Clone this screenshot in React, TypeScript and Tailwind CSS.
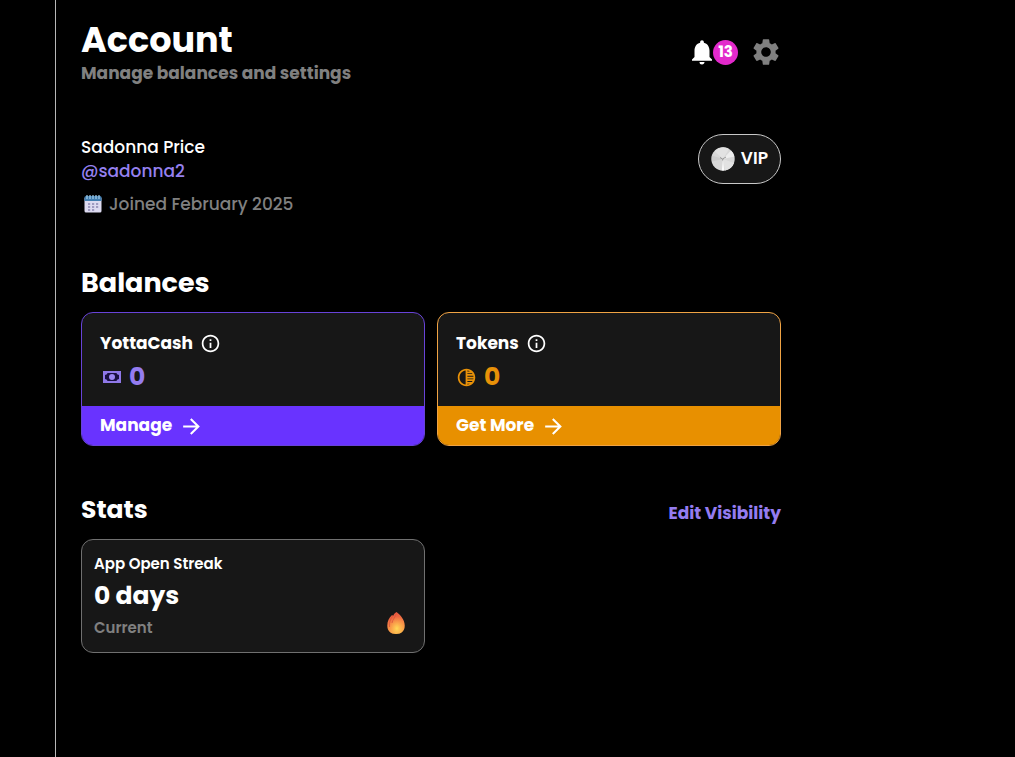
import type { ReactNode } from "react";
import { MdArrowForward, MdInfoOutline, MdNotifications, MdSettings, MdTonality } from "react-icons/md";

function CalendarIcon() {
  return (
    <svg viewBox="0 0 20 20" className="size-5" aria-hidden="true">
      <rect x="1.500" y="3" width="17" height="15.500" rx="1.500" fill="#dcdaf0" />
      <path d="M1.500 7V3.500q0-1.500 1.500-1.500h14q1.500 0 1.500 1.500V7z" fill="#427eb0" />
      <path d="M4 1v4M7 1v4M10 1v4M13 1v4M16 1v4" stroke="#a6d0ec" strokeWidth="1.200" />
      <path d="M5 10h2.200M9 10h2.200M13 10h2.200M5 13h2.200M9 13h2.200M13 13h2.200M5 16h2.200M9 16h2.200" stroke="#8a86b0" strokeWidth="1.500" />
    </svg>
  );
}

function CashIcon() {
  return (
    <svg viewBox="0 0 20 20" className="size-5" aria-hidden="true">
      <path d="M1 4h18v12H1z" fill="#8f78e8" />
      <path d="M5.500 6h9q0 1.500 2.500 2v4q-2.500.5-2.500 2h-9q0-1.500-2.500-2V8q2.500-.5 2.500-2z" fill="#1a1042" />
      <circle cx="10" cy="10" r="3" fill="#9b85f2" />
    </svg>
  );
}

function DiscIcon() {
  return (
    <svg viewBox="0 0 24 24" className="size-6" aria-hidden="true">
      <circle cx="12" cy="12" r="11.700" fill="#d8d8d8" />
      <path d="M12 12 3.500 4A11.700 11.700 0 0 1 18 2zM12 12l11 4a11.700 11.700 0 0 1-9 7.500z" fill="#e2e2e2" />
      <path d="m12 12 8-8.500a11.700 11.700 0 0 1 3.400 6z" fill="#ededed" />
      <path d="m12 12-1.200 11.500h2.400z" fill="#fafafa" />
      <path d="M12 12 1 8.500v6z" fill="#cdcdcd" />
      <path d="m9 10.500 2.500 1.500L15 10M12 12l-.4 1.500" stroke="#858585" strokeWidth=".8" fill="none" />
    </svg>
  );
}

function FlameIcon() {
  return (
    <svg viewBox="0 0 24 26" className="h-[26px] w-6" aria-hidden="true">
      <defs>
        <linearGradient id="flame" x1=".4" y1="0" x2=".6" y2="1">
          <stop offset="0" stopColor="#e6523e" />
          <stop offset=".5" stopColor="#f47c45" />
          <stop offset="1" stopColor="#f9a143" />
        </linearGradient>
        <radialGradient id="glow" cx=".55" cy=".75" r=".55">
          <stop offset="0" stopColor="#ffda58" />
          <stop offset="1" stopColor="#ffb44b" stopOpacity="0" />
        </radialGradient>
      </defs>
      <path d="M12.500 2c4 3 8.200 7.500 8.200 13.500 0 5.500-3.200 8.500-8.700 8.500s-8.700-3-8.700-8.500c0-4.500 1.700-7.500 4.700-10.500l1.200.7C10 4 11 3 12.500 2z" fill="url(#flame)" />
      <path d="M12.500 2c4 3 8.200 7.500 8.200 13.500 0 5.500-3.200 8.500-8.700 8.500s-8.700-3-8.700-8.500z" fill="url(#glow)" />
      <path d="M8.500 6c-2.200 3.500-3.500 6.500-3 11M12 4c-1 4-3.500 5.500-4 9" stroke="#d9573e" strokeWidth=".8" fill="none" />
    </svg>
  );
}

type BalanceProps = {
  title: string;
  icon: ReactNode;
  action: string;
  border: string;
  fill: string;
  text: string;
};

function BalanceCard({ title, icon, action, border, fill, text }: BalanceProps) {
  return (
    <article className={`overflow-hidden rounded-xl border bg-[#171717] ${border}`}>
      <div className="flex h-[93px] flex-col gap-1 px-[18px] pt-4">
        <div className="flex items-center gap-[7px]">
          <h3 className="text-[17px] leading-7 font-bold">{title}</h3>
          <button type="button" aria-label={`About ${title}`}>
            <MdInfoOutline className="size-[21px]" />
          </button>
        </div>
        <div className={`flex items-center gap-[7px] ${text}`}>
          {icon}
          <span className="text-[25px] leading-8 font-bold">0</span>
        </div>
      </div>
      <button type="button" className={`flex h-[39px] w-full items-center gap-[7px] px-[18px] pt-px text-[17px] font-bold ${fill}`}>
        {action}
        <MdArrowForward className="size-[25px]" />
      </button>
    </article>
  );
}

export default function App() {
  return (
    <div className="flex min-h-screen bg-black font-['Poppins','Inter',sans-serif] text-white">
      <aside className="w-14 shrink-0 border-r border-[#b8b8b8]" />
      <main className="min-w-0 max-w-[750px] flex-1 px-[25px] pt-5">
        <header className="flex items-start justify-between">
          <div>
            <h1 className="text-[35px] leading-10 font-bold">Account</h1>
            <p className="pt-px text-[17px] leading-6 font-bold text-[#808080]">Manage balances and settings</p>
          </div>
          <div className="-mr-px flex items-center gap-3 pt-4">
            <button type="button" className="flex items-center" aria-label="Notifications, 13 unread">
              <MdNotifications className="-mr-1 size-[30px]" />
              <span className="flex size-[25px] items-center justify-center rounded-full bg-[#e229cb] text-[15px] font-bold">13</span>
            </button>
            <button type="button" aria-label="Settings">
              <MdSettings className="size-8 text-[#808080]" />
            </button>
          </div>
        </header>

        <section className="flex items-start justify-between pt-[49px]">
          <div>
            <p className="pt-px text-[17px] leading-6 font-medium">Sadonna Price</p>
            <a href="#profile" className="block text-[17px] leading-6 font-medium text-[#9580f0]">@sadonna2</a>
            <p className="flex items-center gap-1.5 pt-[9px] text-[17px] leading-6 font-medium text-[#808080]">
              <span className="pl-0.5"><CalendarIcon /></span>
              Joined February 2025
            </p>
          </div>
          <button type="button" className="flex h-[50px] items-center gap-1.5 rounded-full border border-[#c8c8c8] bg-[#171717] px-3 text-[17px] font-semibold">
            <DiscIcon />
            VIP
          </button>
        </section>

        <section className="pt-[49px]">
          <h2 className="text-[27px] leading-9 font-bold">Balances</h2>
          <div className="grid grid-cols-2 gap-3 pt-[11px]">
            <BalanceCard title="YottaCash" icon={<span className="pl-0.5"><CashIcon /></span>} action="Manage" border="border-[#6843d8]" fill="bg-[#6933ff]" text="text-[#947cf0]" />
            <BalanceCard title="Tokens" icon={<MdTonality className="size-[21px]" />} action="Get More" border="border-[#f0a344]" fill="bg-[#e89000]" text="text-[#e89108]" />
          </div>
        </section>

        <section className="pt-[46px]">
          <div className="flex items-center justify-between">
            <h2 className="text-[25px] leading-9 font-bold">Stats</h2>
            <button type="button" className="pt-1.5 text-[17px] leading-6 font-bold text-[#947cf0]">Edit Visibility</button>
          </div>
          <div className="grid grid-cols-2 gap-3 pt-[11px]">
            <article className="flex h-[114px] items-end justify-between rounded-xl border border-[#707070] bg-[#171717] px-3 pb-3">
              <div>
                <h3 className="text-[15px] leading-6 font-semibold">App Open Streak</h3>
                <p className="py-1 text-[25px] leading-8 font-bold">0 days</p>
                <p className="text-[15px] leading-6 font-semibold text-[#808080]">Current</p>
              </div>
              <span className="pr-1 pb-1"><FlameIcon /></span>
            </article>
          </div>
        </section>
      </main>
    </div>
  );
}
